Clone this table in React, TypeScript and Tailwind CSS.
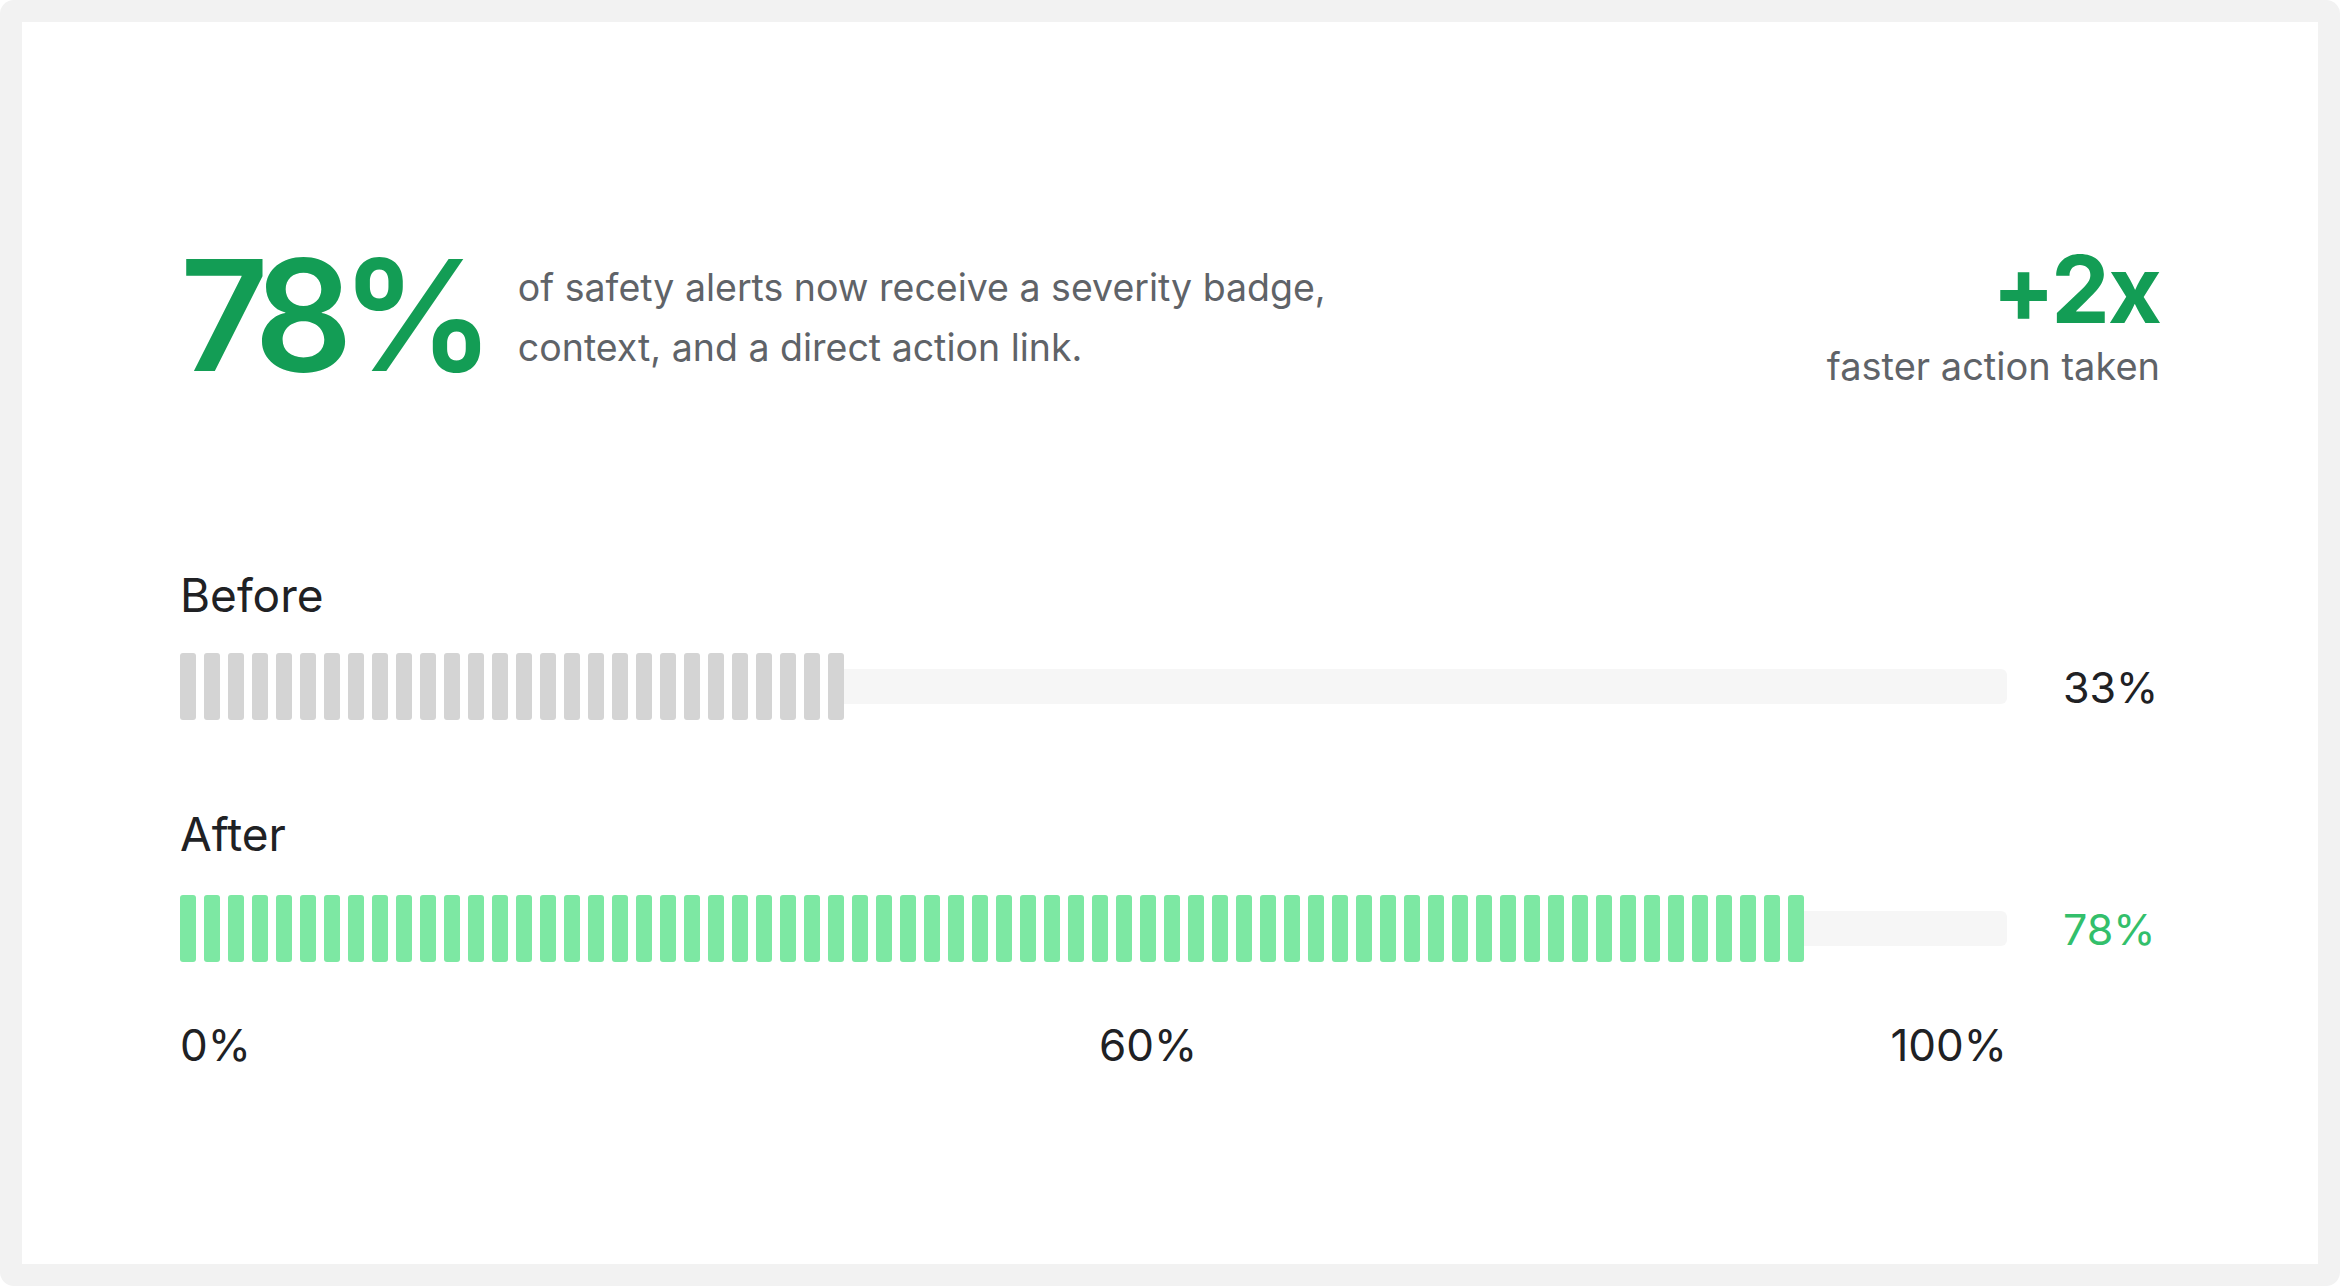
import React from "react";

const font = { fontFamily: "Inter, 'Noto Sans', sans-serif" };

function SegmentBar({
  filled,
  color,
}: {
  filled: number;
  color: string;
}) {
  return (
    <div className="flex items-center flex-1 h-[67px]">
      <div className="flex gap-[8px] h-full">
        {Array.from({ length: filled }).map((_, i) => (
          <div key={i} className={`w-[16px] h-full rounded-[3px] ${color}`} />
        ))}
      </div>
      <div className="flex-1 h-[35px] bg-[#f6f6f6] rounded-r-[6px]" />
    </div>
  );
}

export default function App() {
  return (
    <div className="w-[2340px] h-[1286px] bg-white" style={font}>
      <div className="w-full h-full bg-[#f2f2f2] rounded-[14px] p-[22px]">
        <div className="w-full h-full bg-white px-[158px] pt-[211px]">
          {/* Headline stats */}
          <div className="flex items-start justify-between">
            <div className="flex items-start gap-[35px]">
              <div className="mt-[5px] text-[154px] leading-none font-semibold tracking-[-0.08em] text-[#139d55]">
                78%
              </div>
              <p className="mt-[25px] text-[37.5px] leading-[60px] text-[#5f6368]">
                of safety alerts now receive a severity badge,
                <br />
                context, and a direct action link.
              </p>
            </div>
            <div className="flex flex-col items-end mt-[10px]">
              <div className="text-[93px] leading-none font-bold tracking-[-0.02em] text-[#139d55]">
                +2x
              </div>
              <div className="mt-[8px] text-[38px] leading-[44px] text-[#5f6368]">
                faster action taken
              </div>
            </div>
          </div>

          {/* Before / After bars */}
          <div className="mt-[177px]">
            <div className="text-[46px] leading-[52px] text-[#202124]">Before</div>
            <div className="mt-[32px] flex items-center">
              <SegmentBar filled={28} color="bg-[#d4d4d4]" />
              <div className="ml-[56px] w-[97px] text-[43px] leading-[52px] text-[#202124]">
                33%
              </div>
            </div>

            <div className="mt-[88px] text-[46px] leading-[52px] text-[#202124]">After</div>
            <div className="mt-[35px] flex items-center">
              <SegmentBar filled={68} color="bg-[#7de8a3]" />
              <div className="ml-[56px] w-[97px] text-[43px] leading-[52px] text-[#33bf6b]">
                78%
              </div>
            </div>

            {/* Axis */}
            <div className="mt-[57px] flex">
              <div className="relative flex-1 flex justify-between text-[44px] leading-[52px] text-[#202124]">
                <span>0%</span>
                <span className="absolute left-[919px] top-0">60%</span>
                <span>100%</span>
              </div>
              <div className="ml-[56px] w-[97px]" />
            </div>
          </div>
        </div>
      </div>
    </div>
  );
}
